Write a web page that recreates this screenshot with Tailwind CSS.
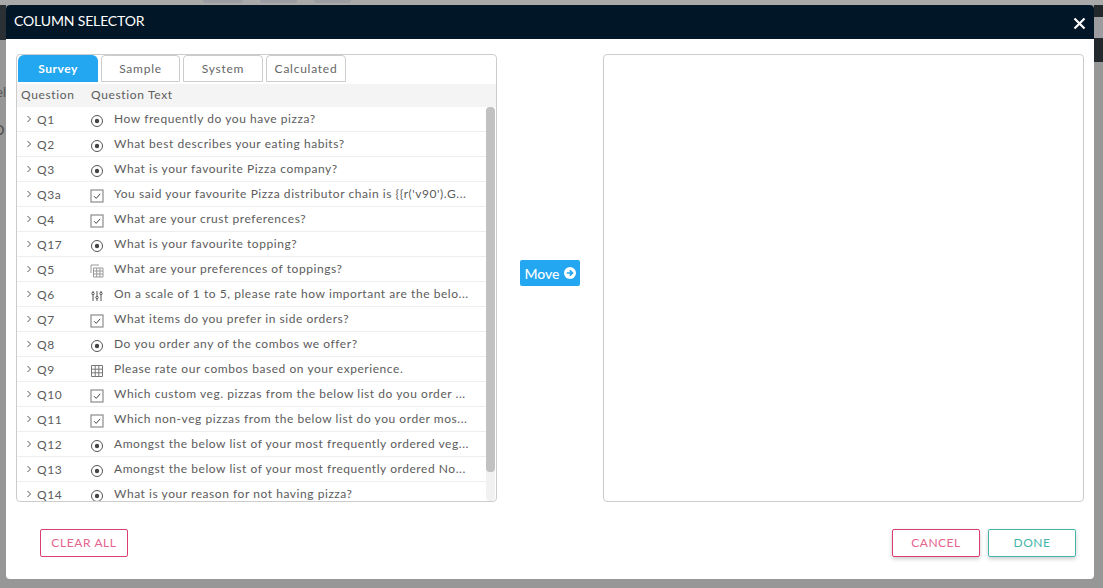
<!DOCTYPE html>
<html lang="en">
<head>
  <title>Column Selector</title>
  <script src="https://cdn.jsdelivr.net/npm/@tailwindcss/browser@4"></script>
</head>
<body class="h-[588px] w-[1103px] overflow-hidden relative bg-[#979797] font-['Lato',sans-serif] text-[#5c5c5c]">
  <svg class="hidden">
    <symbol id="radio" viewBox="0 0 14 14"><circle cx="7" cy="7" r="5.5" fill="none" stroke="#555" stroke-width="1"/><circle cx="7" cy="7" r="2.2" fill="#444"/></symbol>
    <symbol id="check" viewBox="0 0 14 14"><rect x="1" y="1" width="12" height="12" fill="none" stroke="#8c8c8c" stroke-width="1.2"/><path d="M4 7.2 6.2 9.4 10.2 4.8" fill="none" stroke="#444" stroke-width="1"/></symbol>
    <symbol id="grid" viewBox="0 0 14 14"><path d="M1.5 1.5h11v11h-11zM1.5 5.2h11M1.5 8.8h11M5.2 1.5v11M8.8 1.5v11" fill="none" stroke="#777" stroke-width="1"/></symbol>
    <symbol id="gridlight" viewBox="0 0 14 14"><path d="M1 1h8M1 1v8M3.5 4h9.5v9h-9.5zM3.5 7h9.5M3.5 10h9.5M6.7 4v9M9.9 4v9" fill="none" stroke="#999" stroke-width="1"/></symbol>
    <symbol id="sliders" viewBox="0 0 14 14"><path d="M3 6v6M3 2v1M7 2v5M7 10v2M11 6v6M11 2v1" fill="none" stroke="#555" stroke-width="1"/><circle cx="3" cy="4.5" r="1.2" fill="none" stroke="#555"/><circle cx="7" cy="8.5" r="1.2" fill="none" stroke="#555"/><circle cx="11" cy="4.5" r="1.2" fill="none" stroke="#555"/></symbol>
    <symbol id="chev" viewBox="0 0 6 8"><path d="M1.5 1 4.5 4 1.5 7" fill="none" stroke="#555" stroke-width="1"/></symbol>
  </svg>

  <!-- dimmed page behind the modal -->
  <div class="flex flex-col h-full">
    <div class="h-[5px] shrink-0 bg-[#a9a9a9] flex">
      <div class="w-[40px] h-[3px] ml-[203px] bg-[#9a9da1] rounded-b-full"></div>
      <div class="w-[37px] h-[3px] ml-[17px] bg-[#9a9da1] rounded-b-full"></div>
      <div class="w-[37px] h-[3px] ml-[17px] bg-[#9a9da1] rounded-b-full"></div>
    </div>
    <div class="flex-1 flex justify-between">
      <div class="w-[6px] overflow-hidden">
        <div class="h-[35px] bg-[#2b3034]"></div>
        <div class="h-[82px] pt-[44px] text-[13px] leading-4 text-[#555] text-right whitespace-nowrap flex justify-end">el</div>
        <div class="text-[13px] leading-4 text-[#444] flex justify-start -ml-[6px]">O</div>
      </div>
      <div class="w-[9px]">
        <div class="h-[12px] bg-[#23282c]"></div>
        <div class="h-[21px] bg-[#9c9ca0]"></div>
        <div class="h-[24px] bg-[#23282c]"></div>
      </div>
    </div>
  </div>

  <div class="absolute left-[6px] top-[5px] w-[1088px] h-[574px] bg-white rounded-[4px] flex flex-col overflow-hidden">
    <div class="h-[34px] shrink-0 bg-[#011627] flex items-center justify-between pl-2 pr-[8px] text-white">
      <h1 class="text-[14px] tracking-[-0.15px] mb-[4px]">COLUMN SELECTOR</h1>
      <svg class="w-[13px] h-[13px] mt-[2px]" viewBox="0 0 13 13"><path d="M1.5 1.5 11.5 11.5M11.5 1.5 1.5 11.5" stroke="#fff" stroke-width="2.2"/></svg>
    </div>

    <div class="flex items-center pt-[15px] pl-[10px] pr-[10px]">
      <!-- left panel -->
      <section class="w-[481px] h-[448px] border border-[#ccc] rounded-[4px] flex flex-col overflow-hidden relative">
        <div class="flex gap-[3px] pl-px h-[29px] shrink-0 text-[12px] tracking-[0.75px]">
          <button class="w-[80px] h-[27px] bg-[#22a7f0] text-white font-bold tracking-[0.5px] rounded-t-[6px]">Survey</button>
          <button class="w-[79px] h-[27px] border border-[#ccc] rounded-t-[4px] text-[#666]">Sample</button>
          <button class="w-[80px] h-[27px] border border-[#ccc] rounded-t-[4px] text-[#666]">System</button>
          <button class="w-[80px] h-[27px] border border-[#ccc] rounded-t-[4px] text-[#666]">Calculated</button>
        </div>
        <div class="h-[23px] shrink-0 bg-[#f4f4f4] flex items-center pb-[2px] text-[12px] tracking-[0.65px]">
          <span class="w-[74px] pl-[4px]">Question</span><span>Question Text</span>
        </div>
        <div class="flex-1 overflow-hidden pr-[10px] text-[12px] tracking-[0.55px]">
          <div class="h-[25px] border-b border-[#eee] flex items-center"><svg class="w-[6px] h-[8px] ml-[9px] mr-[5px]"><use href="#chev"/></svg><span class="w-[53px] mt-px">Q1</span><svg class="w-[14px] h-[14px] mt-[3px] mr-[10px]"><use href="#radio"/></svg><span class="w-[362px] whitespace-nowrap">How frequently do you have pizza?</span></div>
          <div class="h-[25px] border-b border-[#eee] flex items-center"><svg class="w-[6px] h-[8px] ml-[9px] mr-[5px]"><use href="#chev"/></svg><span class="w-[53px] mt-px">Q2</span><svg class="w-[14px] h-[14px] mt-[3px] mr-[10px]"><use href="#radio"/></svg><span class="w-[362px] whitespace-nowrap">What best describes your eating habits?</span></div>
          <div class="h-[25px] border-b border-[#eee] flex items-center"><svg class="w-[6px] h-[8px] ml-[9px] mr-[5px]"><use href="#chev"/></svg><span class="w-[53px] mt-px">Q3</span><svg class="w-[14px] h-[14px] mt-[3px] mr-[10px]"><use href="#radio"/></svg><span class="w-[362px] whitespace-nowrap">What is your favourite Pizza company?</span></div>
          <div class="h-[25px] border-b border-[#eee] flex items-center"><svg class="w-[6px] h-[8px] ml-[9px] mr-[5px]"><use href="#chev"/></svg><span class="w-[53px] mt-px">Q3a</span><svg class="w-[14px] h-[14px] mt-[3px] mr-[10px]"><use href="#check"/></svg><span class="w-[362px] whitespace-nowrap">You said your favourite Pizza distributor chain is {{r('v90').G...</span></div>
          <div class="h-[25px] border-b border-[#eee] flex items-center"><svg class="w-[6px] h-[8px] ml-[9px] mr-[5px]"><use href="#chev"/></svg><span class="w-[53px] mt-px">Q4</span><svg class="w-[14px] h-[14px] mt-[3px] mr-[10px]"><use href="#check"/></svg><span class="w-[362px] whitespace-nowrap">What are your crust preferences?</span></div>
          <div class="h-[25px] border-b border-[#eee] flex items-center"><svg class="w-[6px] h-[8px] ml-[9px] mr-[5px]"><use href="#chev"/></svg><span class="w-[53px] mt-px">Q17</span><svg class="w-[14px] h-[14px] mt-[3px] mr-[10px]"><use href="#radio"/></svg><span class="w-[362px] whitespace-nowrap">What is your favourite topping?</span></div>
          <div class="h-[25px] border-b border-[#eee] flex items-center"><svg class="w-[6px] h-[8px] ml-[9px] mr-[5px]"><use href="#chev"/></svg><span class="w-[53px] mt-px">Q5</span><svg class="w-[14px] h-[14px] mt-[3px] mr-[10px]"><use href="#gridlight"/></svg><span class="w-[362px] whitespace-nowrap">What are your preferences of toppings?</span></div>
          <div class="h-[25px] border-b border-[#eee] flex items-center"><svg class="w-[6px] h-[8px] ml-[9px] mr-[5px]"><use href="#chev"/></svg><span class="w-[53px] mt-px">Q6</span><svg class="w-[14px] h-[14px] mt-[3px] mr-[10px]"><use href="#sliders"/></svg><span class="w-[362px] whitespace-nowrap">On a scale of 1 to 5, please rate how important are the belo...</span></div>
          <div class="h-[25px] border-b border-[#eee] flex items-center"><svg class="w-[6px] h-[8px] ml-[9px] mr-[5px]"><use href="#chev"/></svg><span class="w-[53px] mt-px">Q7</span><svg class="w-[14px] h-[14px] mt-[3px] mr-[10px]"><use href="#check"/></svg><span class="w-[362px] whitespace-nowrap">What items do you prefer in side orders?</span></div>
          <div class="h-[25px] border-b border-[#eee] flex items-center"><svg class="w-[6px] h-[8px] ml-[9px] mr-[5px]"><use href="#chev"/></svg><span class="w-[53px] mt-px">Q8</span><svg class="w-[14px] h-[14px] mt-[3px] mr-[10px]"><use href="#radio"/></svg><span class="w-[362px] whitespace-nowrap">Do you order any of the combos we offer?</span></div>
          <div class="h-[25px] border-b border-[#eee] flex items-center"><svg class="w-[6px] h-[8px] ml-[9px] mr-[5px]"><use href="#chev"/></svg><span class="w-[53px] mt-px">Q9</span><svg class="w-[14px] h-[14px] mt-[3px] mr-[10px]"><use href="#grid"/></svg><span class="w-[362px] whitespace-nowrap">Please rate our combos based on your experience.</span></div>
          <div class="h-[25px] border-b border-[#eee] flex items-center"><svg class="w-[6px] h-[8px] ml-[9px] mr-[5px]"><use href="#chev"/></svg><span class="w-[53px] mt-px">Q10</span><svg class="w-[14px] h-[14px] mt-[3px] mr-[10px]"><use href="#check"/></svg><span class="w-[362px] whitespace-nowrap">Which custom veg. pizzas from the below list do you order ...</span></div>
          <div class="h-[25px] border-b border-[#eee] flex items-center"><svg class="w-[6px] h-[8px] ml-[9px] mr-[5px]"><use href="#chev"/></svg><span class="w-[53px] mt-px">Q11</span><svg class="w-[14px] h-[14px] mt-[3px] mr-[10px]"><use href="#check"/></svg><span class="w-[362px] whitespace-nowrap">Which non-veg pizzas from the below list do you order mos...</span></div>
          <div class="h-[25px] border-b border-[#eee] flex items-center"><svg class="w-[6px] h-[8px] ml-[9px] mr-[5px]"><use href="#chev"/></svg><span class="w-[53px] mt-px">Q12</span><svg class="w-[14px] h-[14px] mt-[3px] mr-[10px]"><use href="#radio"/></svg><span class="w-[362px] whitespace-nowrap">Amongst the below list of your most frequently ordered veg...</span></div>
          <div class="h-[25px] border-b border-[#eee] flex items-center"><svg class="w-[6px] h-[8px] ml-[9px] mr-[5px]"><use href="#chev"/></svg><span class="w-[53px] mt-px">Q13</span><svg class="w-[14px] h-[14px] mt-[3px] mr-[10px]"><use href="#radio"/></svg><span class="w-[362px] whitespace-nowrap">Amongst the below list of your most frequently ordered No...</span></div>
          <div class="h-[24px] flex items-center"><svg class="w-[6px] h-[8px] ml-[9px] mr-[5px]"><use href="#chev"/></svg><span class="w-[53px] mt-px">Q14</span><svg class="w-[14px] h-[14px] mt-[3px] mr-[10px]"><use href="#radio"/></svg><span class="w-[362px] whitespace-nowrap">What is your reason for not having pizza?</span></div>
        </div>
        <!-- scrollbar -->
        <div class="absolute right-px top-[52px] bottom-0 w-[9px] bg-[#f1f1f1] rounded-[4px]">
          <div class="h-[365px] bg-[#c1c1c1] rounded-[4px]"></div>
        </div>
      </section>

      <div class="w-[106px] flex justify-center pb-[10px]">
        <button class="w-[60px] h-[26px] bg-[#22a7f0] text-white text-[14px] font-medium rounded-[2px] flex items-center justify-center gap-[4px]">Move
          <svg class="w-[12px] h-[12px]" viewBox="0 0 13 13"><circle cx="6.5" cy="6.5" r="6.5" fill="#fff"/><path d="M3 6.5h6M6.2 3.6 9.2 6.5 6.2 9.4" fill="none" stroke="#22a7f0" stroke-width="1.8"/></svg>
        </button>
      </div>

      <!-- right panel -->
      <section class="w-[481px] h-[448px] border border-[#ccc] rounded-[4px]"></section>
    </div>

    <div class="flex items-center justify-between pl-[34px] pr-[18px] pt-[27px] text-[12px] tracking-[0.5px]">
      <button class="w-[88px] h-[28px] border border-[#d9406f] rounded-[2px] text-[#e5648e] tracking-[0.6px]">CLEAR ALL</button>
      <div class="flex gap-2">
        <button class="w-[88px] h-[28px] border border-[#d9406f] rounded-[2px] text-[#e5648e] shadow-[0_2px_4px_rgba(0,0,0,0.2)]">CANCEL</button>
        <button class="w-[88px] h-[28px] border border-[#45b5aa] rounded-[2px] text-[#45b5aa] shadow-[0_2px_4px_rgba(0,0,0,0.2)]">DONE</button>
      </div>
    </div>
  </div>
</body>
</html>
